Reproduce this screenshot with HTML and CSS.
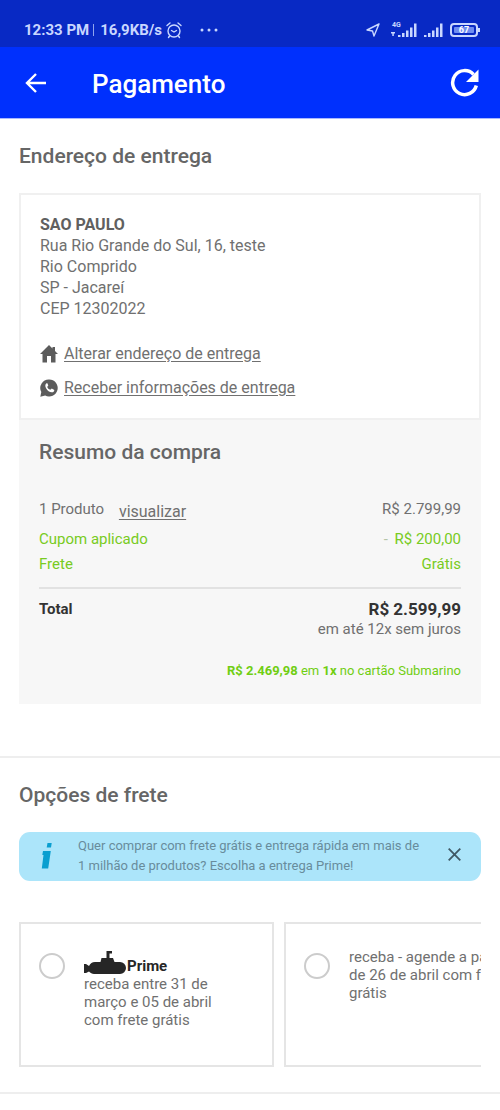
FILE: index.html
```html
<!DOCTYPE html>
<html lang="pt-BR">
<head>
<meta charset="utf-8">
<meta name="viewport" content="width=device-width, initial-scale=1">
<title>Pagamento</title>
<link rel="stylesheet" href="styles.css">
</head>
<body>
<div class="status">
  <span>12:33 PM</span>
  <span class="status-sep"></span>
  <span>16,9KB/s</span>
  <svg class="alarm" width="16" height="18" viewBox="0 0 16 18" fill="none" stroke="currentColor" stroke-width="1.4" stroke-linecap="round"><circle cx="8" cy="10" r="6"/><path d="M1 4.5 4 2M15 4.5 12 2M5.500 9.500 8 11l2.500-1.500M3.500 15 2.500 16.500M12.500 15l1 1.500"/></svg>
  <svg class="dots" width="18" height="4" viewBox="0 0 18 4" fill="currentColor"><circle cx="2" cy="2" r="1.500"/><circle cx="9" cy="2" r="1.500"/><circle cx="16" cy="2" r="1.500"/></svg>
  <div class="status-icons">
    <svg width="14" height="14" viewBox="0 0 14 14" fill="none" stroke="currentColor" stroke-width="1.400" stroke-linejoin="round"><path d="M13 1 1 7l5.500 1L8 13z"/></svg>
    <div class="network">
      <span class="network-type">4G</span>
      <svg width="26" height="16" viewBox="0 0 26 16" fill="currentColor"><path d="M0 10h4v1.500H2.800V14H1.300v-2.500H0zM7 13h2.500v2H7zM11 11h2.500v4H11zM15 8.500h2.500V15H15zM19 5.500h2.500V15H19zM23 1.500h2.500V15H23z"/></svg>
    </div>
    <svg width="19" height="16" viewBox="0 0 19 16" fill="currentColor"><path d="M0 13h2.500v2H0zM4 11h2.500v4H4zM8 8.500h2.500V15H8zM12 5.500h2.500V15H12zM16 1.500h2.500V15H16z"/></svg>
    <div class="battery"><span class="battery-level">67</span></div>
  </div>
</div>
<header class="appbar">
  <button class="icon-btn" type="button" aria-label="Voltar">
    <svg width="22" height="22" viewBox="0 0 22 22" fill="none" stroke="currentColor" stroke-width="2.400"><path d="M21 11H2.500M11 2 2 11l9 9"/></svg>
  </button>
  <h1 class="appbar-title">Pagamento</h1>
  <button class="icon-btn" type="button" aria-label="Atualizar">
    <svg width="30" height="30" viewBox="0 0 30 30"><path d="M26.300 17.500A12 12 0 1 1 23.500 6.500" fill="none" stroke="currentColor" stroke-width="3.500"/><path d="M28.500 1.500V14H16z" fill="currentColor"/></svg>
  </button>
</header>
<main>
  <section class="order">
    <h2 class="heading">Endereço de entrega</h2>
    <div class="address">
      <address class="address-text"><strong>SAO PAULO</strong><br>Rua Rio Grande do Sul, 16, teste<br>Rio Comprido<br>SP - Jacareí<br>CEP 12302022</address>
      <a class="action" href="#endereco">
        <svg width="18" height="18" viewBox="0 0 18 18" fill="currentColor"><path d="M9 0 0 9h2.500v8.500H7V11h4v6.500h4.500V9H18l-3-3V2h-2.500v1.500z"/></svg>
        <span class="action-label">Alterar endereço de entrega</span>
      </a>
      <a class="action" href="#informacoes">
        <svg width="18" height="18" viewBox="0 0 18 18"><path d="M9.200.5a8.500 8.500 0 1 1-4 16L.3 17.700l1-4.700A8.500 8.500 0 0 1 9.200.5z" fill="currentColor"/><path d="M6.500 4.200c-3.300 2.300.8 9 5.300 9 1.500 0 2.500-.9 2.500-2.300l-2.500-1.400-1.500 1.300C8.700 10.200 7.600 9 7.200 7.900l1.100-1.300-.9-2.400z" fill="#fff"/></svg>
        <span class="action-label">Receber informações de entrega</span>
      </a>
    </div>
    <div class="summary">
      <h2 class="heading">Resumo da compra</h2>
      <div class="row row-first"><span>1 Produto <a class="view" href="#produtos">visualizar</a></span><span>R$ 2.799,99</span></div>
      <div class="row green"><span>Cupom aplicado</span><span><span class="minus">-</span> R$ 200,00</span></div>
      <div class="row green"><span>Frete</span><span>Grátis</span></div>
      <div class="total">
        <strong class="total-label">Total</strong>
        <div class="total-values"><strong class="total-price">R$ 2.599,99</strong><span>em até 12x sem juros</span></div>
      </div>
      <p class="card-price"><b>R$ 2.469,98</b> em <b>1x</b> no cartão Submarino</p>
    </div>
  </section>
  <section class="shipping">
    <h2 class="heading">Opções de frete</h2>
    <div class="banner">
      <svg width="12" height="26" viewBox="0 0 12 26" fill="#0a9fd0"><path d="M6.500 0h4.200L10 4.500H5.700zM2 8h7.800L7.200 25.500H.8L2.500 12H1.300z"/></svg>
      <p class="banner-text">Quer comprar com frete grátis e entrega rápida em mais de 1 milhão de produtos? Escolha a entrega Prime!</p>
      <button class="close" type="button" aria-label="Fechar"><svg width="13" height="13" viewBox="0 0 13 13" fill="none" stroke="currentColor" stroke-width="1.800"><path d="m.7.7 11.600 11.600M12.300.7.7 12.300"/></svg></button>
    </div>
    <div class="options">
      <label class="option">
        <input class="radio" type="radio" name="frete">
        <span><span class="prime"><svg width="42" height="24" viewBox="0 0 42 24" fill="currentColor"><path d="M22.500 0H28v2.500h-2.500V7H29l1.500 4H36a6 6 0 0 1 0 12H10c-2 0-3.500-1-5-2.500L2 22H0v-9h2l3 2c1.500-2.500 3-4 6-4h5.500l1-4h5z"/></svg><b>Prime</b></span>receba entre 31 de<br>março e 05 de abril<br>com frete grátis</span>
      </label>
      <label class="option">
        <input class="radio" type="radio" name="frete">
        <span>receba - agende a partir<br>de 26 de abril com frete<br>grátis</span>
      </label>
    </div>
  </section>
</main>
</body>
</html>
```
FILE: styles.css
```css
* { box-sizing: border-box; }
body { margin: 0; background: #fff; color: #707070; font: 15px/21px Roboto, sans-serif; }
svg { display: block; flex: none; }
h1, h2, p { margin: 0; }
a { color: inherit; }
button { padding: 0; border: 0; background: none; color: inherit; cursor: pointer; }
b, strong { font-weight: 700; }

.status { display: flex; align-items: center; height: 47px; padding: 13px 20px 0 24px; background: #0829c4; color: #c9d7ff; font-size: 15px; font-weight: 700; white-space: nowrap; }
.status-sep { width: 1px; height: 12px; margin: 0 6px 0 4px; background: #8fa4ee; }
.alarm { margin-left: 4px; }
.dots { margin-left: 18px; }
.status-icons { display: flex; align-items: center; gap: 7px; margin-left: auto; }
.network { position: relative; margin-left: 4px; }
.network-type { position: absolute; top: -1px; left: 1px; font-size: 7px; line-height: 8px; }
.battery { position: relative; width: 28px; height: 14px; margin-right: 2px; padding: 2px; border: 2px solid; border-radius: 4px; }
.battery::after { content: ""; position: absolute; right: -4px; top: 3px; width: 2px; height: 4px; background: currentColor; }
.battery-level { display: block; border-radius: 1px; background: #6f8df0; color: #fff; font-size: 9px; line-height: 6px; text-align: center; }

.appbar { display: flex; align-items: center; height: 72px; padding: 0 20px 0 25px; border-bottom: 1px solid #a9b8ff; background: #0030fd; color: #fff; }
.appbar-title { flex: 1; margin-left: 45px; padding-top: 2px; font-size: 26px; line-height: 32px; font-weight: 500; }
.icon-btn { color: #fff; }

.heading { color: #666; font-size: 21px; line-height: 24px; font-weight: 500; }
.order { padding: 25px 19px 52px; }
.address { margin-top: 25px; padding: 19px 19px 20px; border: 2px solid #f0f0f0; font-size: 16px; }
.address-text { margin-bottom: 24px; font-style: normal; }
.address-text strong { color: #606060; }
.action { display: flex; align-items: center; gap: 6px; text-decoration: none; }
.action + .action { margin-top: 13px; }
.action svg { color: #5c5c5c; }
.action-label { text-decoration: underline; text-underline-offset: 2px; }

.summary { padding: 20px 20px 23px; background: #f7f7f7; }
.row { display: flex; justify-content: space-between; margin-top: 4px; }
.row-first { margin-top: 35px; margin-bottom: 7px; }
.view { display: inline-block; margin-left: 11px; padding-top: 2px; font-size: 16px; line-height: 21px; vertical-align: top; text-underline-offset: 2px; }
.green { color: #78cb22; }
.minus { margin-right: 3px; color: #b5c5a8; }
.total { display: flex; justify-content: space-between; margin-top: 12px; padding-top: 10px; border-top: 2px solid #e2e2e2; }
.total-label, .total-price { color: #333; }
.total-values { display: flex; flex-direction: column; align-items: flex-end; line-height: 20px; }
.total-price { font-size: 17px; }
.card-price { margin-top: 21px; color: #70ce12; font-size: 13px; text-align: right; }

.shipping { padding: 25px 19px; border-top: 2px solid #eee; border-bottom: 2px solid #eee; }
.banner { display: flex; align-items: center; margin-top: 25px; padding: 4px 20px 5px 22px; border-radius: 11px; background: #ace5fa; color: #688c9c; }
.banner-text { flex: 1; margin: 0 20px 0 25px; font-size: 13px; line-height: 20px; }
.close { padding-bottom: 3px; color: #3f5965; }
.options { display: flex; gap: 10px; margin-top: 41px; overflow: hidden; }
.option { display: flex; flex: none; gap: 19px; width: 255px; height: 145px; padding: 24px 18px; border: 2px solid #e5e5e5; line-height: 18px; white-space: nowrap; }
.radio { appearance: none; flex: none; width: 26px; height: 26px; margin: 5px 0 0; border: 2px solid #ccc; border-radius: 50%; background: #fff; }
.prime { display: flex; align-items: flex-end; gap: 1px; padding-top: 3px; color: #262626; }
```
